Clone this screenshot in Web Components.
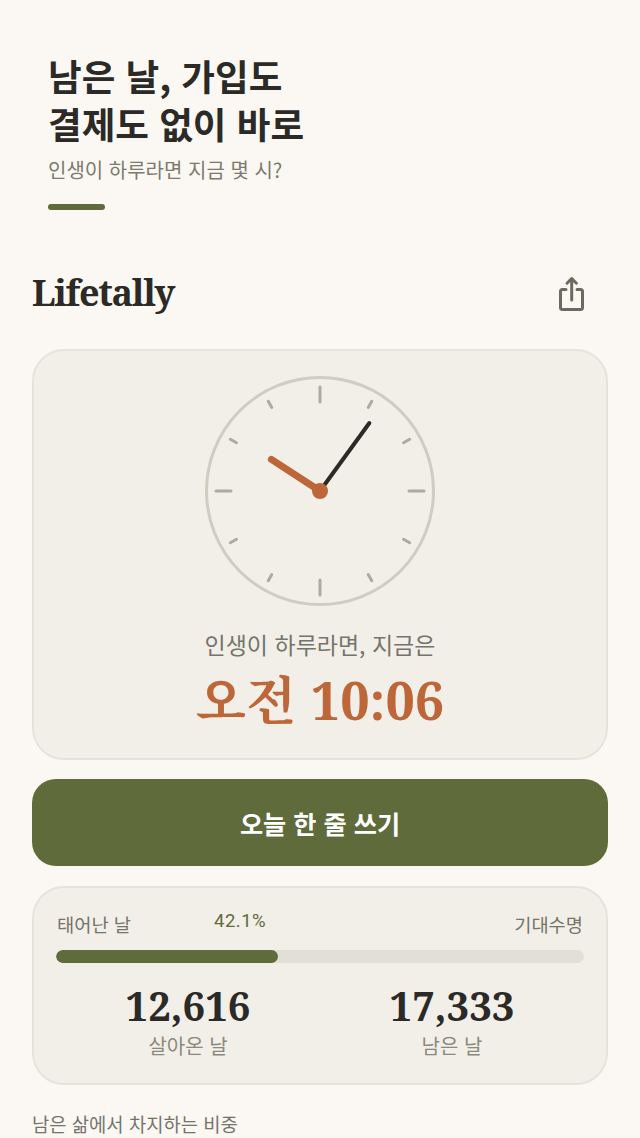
<!doctype html>
<html lang="ko">
<head>
<meta charset="utf-8">
<title>Lifetally</title>
<style>
html, body { margin: 0; height: 1138px; overflow: hidden; background: #fbf8f3; }
body { font-family: "Noto Sans CJK KR", "Noto Sans", sans-serif; color: #2b2a26; }
</style>
</head>
<body>
<lt-intro>
	<span slot="title">남은 날, 가입도<br>결제도 없이 바로</span>
	인생이 하루라면 지금 몇 시?
</lt-intro>
<lt-app>
	<lt-header>Lifetally</lt-header>
	<lt-clock hour="10" minute="6" label="인생이 하루라면, 지금은" time="오전 10:06"></lt-clock>
	<lt-button>오늘 한 줄 쓰기</lt-button>
	<lt-progress percent="42.1" lived="12,616" left="17,333"></lt-progress>
	<lt-note>남은 삶에서 차지하는 비중</lt-note>
</lt-app>

<script>
const tpl = html => {
	const t = document.createElement('template')
	t.innerHTML = html
	return t
}
const withTemplate = (ele, t) => {
	ele.attachShadow({mode: 'open'}).append(t.content.cloneNode(true))
}
const serif = `"Noto Serif", "Liberation Serif", "Noto Serif CJK KR", "Noto Sans CJK KR", serif`

const intro = tpl(`<style>
:host { display: block; padding: 52px 48px 0; }
h1 { margin: 0; font-size: 36.600px; line-height: 48px; font-weight: 700; color: #2b2a26; }
p { margin: 8px 0 0; font-size: 20px; line-height: 28px; color: #7b7a6e; }
i { display: block; width: 57px; height: 6px; margin-top: 20px; border-radius: 3px; background: #5f6b3a; }
</style>
<h1><slot name="title"></slot></h1>
<p><slot></slot></p>
<i></i>`)
class LtIntro extends HTMLElement {
	constructor() {
		super()
		withTemplate(this, intro)
	}
}
customElements.define('lt-intro', LtIntro)

const app = tpl(`<style>
:host { display: flex; flex-direction: column; padding: 51px 32px 0; }
</style>
<slot></slot>`)
class LtApp extends HTMLElement {
	constructor() {
		super()
		withTemplate(this, app)
	}
}
customElements.define('lt-app', LtApp)

const header = tpl(`<style>
:host { display: flex; align-items: center; justify-content: space-between; height: 64px; margin-bottom: 24px; }
h2 { margin: 0; font: 700 36px/48px ${serif}; letter-spacing: -1.300px; color: #2b2a26; }
svg { display: block; margin-right: 19px; }
</style>
<h2><slot></slot></h2>
<svg width="32" height="40" viewBox="0 0 32 40" fill="none" stroke="#6b6a5e" stroke-width="3" stroke-linecap="round" stroke-linejoin="round">
	<path d="M9 16.500H5.500a2 2 0 0 0-2 2V34.500a2 2 0 0 0 2 2H23.500a2 2 0 0 0 2-2V18.500a2 2 0 0 0-2-2H20"/>
	<path d="M14.700 27V5.500M10 10.200 14.700 5.500 19.400 10.200"/>
</svg>`)
class LtHeader extends HTMLElement {
	constructor() {
		super()
		withTemplate(this, header)
	}
}
customElements.define('lt-header', LtHeader)

const clock = tpl(`<style>
:host { display: flex; flex-direction: column; align-items: center; box-sizing: border-box; height: 411px; padding: 24px 0 0; border: 2px solid #e6e3db; border-radius: 32px; background: #f2efe8; }
svg { display: block; }
p { margin: 21px 0 0; font-size: 23px; line-height: 32px; color: #75746a; }
b { margin-top: 6px; font: 700 52px/68px ${serif}; word-spacing: 1px; color: #bd6638; }
</style>
<svg id="face" width="232" height="232" viewBox="-116 -116 232 232"></svg>
<p id="label"></p>
<b id="time"></b>`)
class LtClock extends HTMLElement {
	constructor() {
		super()
		withTemplate(this, clock)
	}

	connectedCallback() {
		const $ = s => this.shadowRoot.querySelector(s)
		$('#label').textContent = this.getAttribute('label')
		$('#time').textContent = this.getAttribute('time')
		const h = +this.getAttribute('hour'), m = +this.getAttribute('minute')
		let out = `<circle r="113.500" fill="none" stroke="#cfccc2" stroke-width="3"/>`
		for (let i = 0; i < 12; i++) {
			const long = i % 3 === 0
			out += `<line y1="${long ? -104 : -103.500}" y2="${long ? -89 : -96.500}" transform="rotate(${i * 30})" stroke="#adaa9e" stroke-width="3" stroke-linecap="round"/>`
		}
		out += `<line y2="-84" transform="rotate(${m * 6})" stroke="#2b2a26" stroke-width="4" stroke-linecap="round"/>`
		out += `<line y2="-58" transform="rotate(${(h % 12) * 30 + m / 2})" stroke="#bd6638" stroke-width="7" stroke-linecap="round"/>`
		out += `<circle r="8" fill="#bd6638"/>`
		$('#face').innerHTML = out
	}
}
customElements.define('lt-clock', LtClock)

const button = tpl(`<style>
:host { display: flex; align-items: center; justify-content: center; height: 87px; margin-top: 19px; box-sizing: border-box; border-radius: 24px; background: #5f6b3a; color: #fff; font-size: 25.200px; font-weight: 700; }
</style>
<slot></slot>`)
class LtButton extends HTMLElement {
	constructor() {
		super()
		withTemplate(this, button)
	}
}
customElements.define('lt-button', LtButton)

const progress = tpl(`<style>
:host { display: block; box-sizing: border-box; height: 199px; margin-top: 20px; padding: 22px 22px 0; border: 2px solid #e6e3db; border-radius: 32px; background: #f2efe8; }
.top { position: relative; display: flex; justify-content: space-between; padding: 0 1px; font-size: 18.700px; line-height: 28px; color: #75746a; }
.pct { position: absolute; top: -3px; left: 158px; font: 400 18.500px/28px Roboto, sans-serif; color: #5f6b3a; letter-spacing: .5px; }
.bar { height: 13px; margin-top: 12px; border-radius: 7px; background: #e2dfd6; overflow: hidden; }
.bar i { display: block; height: 100%; border-radius: 7px; background: #5f6b3a; }
.nums { display: grid; grid-template-columns: 1fr 1fr; margin-top: 17px; text-align: center; }
b { display: block; font: 700 40px/52px ${serif}; color: #2b2a26; }
span.cap { display: block; margin-top: 1px; font-size: 20px; line-height: 26px; color: #8a897d; }
</style>
<div class="top"><span>태어난 날</span><span class="pct" id="pct"></span><span>기대수명</span></div>
<div class="bar"><i id="fill"></i></div>
<div class="nums">
	<div><b id="lived"></b><span class="cap">살아온 날</span></div>
	<div><b id="left"></b><span class="cap">남은 날</span></div>
</div>`)
class LtProgress extends HTMLElement {
	constructor() {
		super()
		withTemplate(this, progress)
	}

	connectedCallback() {
		const $ = s => this.shadowRoot.querySelector(s)
		const pct = this.getAttribute('percent')
		$('#pct').textContent = `${pct}%`
		$('#fill').style.width = `${pct}%`
		$('#lived').textContent = this.getAttribute('lived')
		$('#left').textContent = this.getAttribute('left')
	}
}
customElements.define('lt-progress', LtProgress)

const note = tpl(`<style>
:host { display: block; margin-top: 25px; font-size: 18.800px; line-height: 28px; color: #75746a; }
</style>
<slot></slot>`)
class LtNote extends HTMLElement {
	constructor() {
		super()
		withTemplate(this, note)
	}
}
customElements.define('lt-note', LtNote)
</script>
</body>
</html>
